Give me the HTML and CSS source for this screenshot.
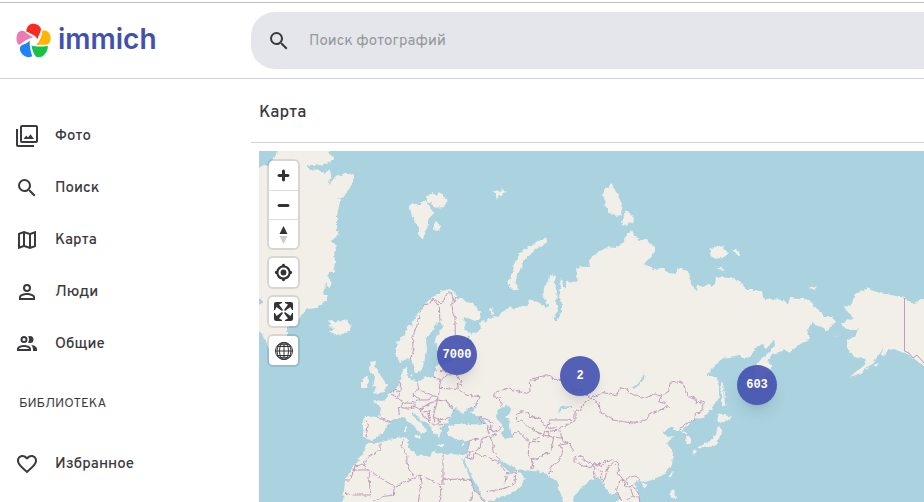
FILE: index.html
```html
<!DOCTYPE html>
<html lang="ru">
<head>
<meta charset="utf-8">
<meta name="viewport" content="width=device-width, initial-scale=1">
<title>Карта - Immich</title>
<link rel="stylesheet" href="styles.css">
</head>
<body>
<svg class="sprite" aria-hidden="true">
  <symbol id="magnify" viewBox="0 0 24 24"><path d="M9.5,3A6.5,6.5 0 0,1 16,9.5C16,11.11 15.41,12.59 14.44,13.73L14.71,14H15.5L20.5,19L19,20.5L14,15.5V14.71L13.73,14.44C12.59,15.41 11.11,16 9.5,16A6.5,6.5 0 0,1 3,9.5A6.5,6.5 0 0,1 9.5,3M9.5,5C7,5 5,7 5,9.5C5,12 7,14 9.5,14C12,14 14,12 14,9.5C14,7 12,5 9.5,5Z"/></symbol>
</svg>
<header class="topbar">
  <a class="brand" href="#">
    <svg class="brand-mark" viewBox="48 70 106 104" aria-hidden="true">
      <path fill="#fa2921" d="M79 95C80 76 92 71 101 71C112 71 122 78 124 88C122 100 114 110 113 118C108 108 95 102 79 95Z"/>
      <path fill="#ffb400" d="M128 92C145 88 153 103 153 115C153 127 146 135 138 135C128 134 118 136 109 135C120 125 127 110 128 92Z"/>
      <path fill="#18c249" d="M95 137C106 141 125 142 144 138C146 150 138 162 132 167C124 174 115 174 109 171C101 163 97 150 95 137Z"/>
      <path fill="#1e83f7" d="M90 122C88 138 92 152 97 170C88 176 70 170 63 158C58 150 59 140 66 136C76 133 84 128 90 122Z"/>
      <path fill="#ed79b5" d="M58 136C48 130 48 112 52 102C57 92 67 90 75 95C82 102 90 108 100 112C85 115 70 125 58 136Z"/>
    </svg>
    <span class="brand-name">immich</span>
  </a>
  <form class="search">
    <button class="search-button" type="button" aria-label="Поиск"><svg class="icon"><use href="#magnify"/></svg></button>
    <input class="search-input" type="text" placeholder="Поиск фотографий" aria-label="Поиск фотографий">
  </form>
</header>
<div class="layout">
  <nav class="sidebar">
    <a class="nav-item" href="#"><svg class="icon" viewBox="0 0 24 24"><path d="M21,17H7V3H21M21,1H7A2,2 0 0,0 5,3V17A2,2 0 0,0 7,19H21A2,2 0 0,0 23,17V3A2,2 0 0,0 21,1M3,5H1V21A2,2 0 0,0 3,23H19V21H3M8.500,15L11.250,11.500L13,13.500L15.500,10.300L19,15Z"/></svg>Фото</a>
    <a class="nav-item" href="#"><svg class="icon"><use href="#magnify"/></svg>Поиск</a>
    <a class="nav-item" href="#"><svg class="icon" viewBox="0 0 24 24"><path d="M20.5,3L20.34,3.03L15,5.1L9,3L3.36,4.9C3.15,4.97 3,5.15 3,5.38V20.5A0.5,0.5 0 0,0 3.5,21L3.66,20.97L9,18.9L15,21L20.64,19.1C20.85,19.03 21,18.85 21,18.62V3.5A0.5,0.5 0 0,0 20.5,3M10,5.47L14,6.87V18.53L10,17.13V5.47M5,6.46L8,5.45V17.15L5,18.31V6.46M19,17.54L16,18.55V6.86L19,5.7V17.54Z"/></svg>Карта</a>
    <a class="nav-item" href="#"><svg class="icon" viewBox="0 0 24 24"><path d="M12,4A4,4 0 0,1 16,8A4,4 0 0,1 12,12A4,4 0 0,1 8,8A4,4 0 0,1 12,4M12,6A2,2 0 0,0 10,8A2,2 0 0,0 12,10A2,2 0 0,0 14,8A2,2 0 0,0 12,6M12,13C14.67,13 20,14.33 20,17V20H4V17C4,14.33 9.33,13 12,13M12,14.9C9.03,14.9 5.9,16.36 5.9,17V18.1H18.1V17C18.1,16.36 14.97,14.9 12,14.9Z"/></svg>Люди</a>
    <a class="nav-item" href="#"><svg class="icon" viewBox="0 0 24 24"><path d="M13.07 10.41A5 5 0 0 0 13.07 4.59A3.39 3.39 0 0 1 15 4A3.5 3.5 0 0 1 15 11A3.39 3.39 0 0 1 13.07 10.41M5.5 7.5A3.5 3.5 0 1 1 9 11A3.5 3.5 0 0 1 5.5 7.5M7.5 7.5A1.5 1.5 0 1 0 9 6A1.5 1.5 0 0 0 7.5 7.5M16 17V19H2V17S2 13 9 13 16 17 16 17M14 17C13.86 16.22 12.67 15 9 15S4.07 16.31 4 17M15.95 13A5.32 5.32 0 0 1 18 17V19H22V17S22 13.37 15.94 13Z"/></svg>Общие</a>
    <h2 class="nav-heading">БИБЛИОТЕКА</h2>
    <a class="nav-item" href="#"><svg class="icon" viewBox="0 0 24 24"><path d="M12.1,18.55L12,18.65L11.89,18.55C7.14,14.24 4,11.39 4,8.5C4,6.5 5.5,5 7.5,5C9.04,5 10.54,6 11.07,7.36H12.93C13.46,6 14.96,5 16.5,5C18.5,5 20,6.5 20,8.5C20,11.39 16.86,14.24 12.1,18.55M16.5,3C14.76,3 13.09,3.81 12,5.08C10.91,3.81 9.24,3 7.5,3C4.42,3 2,5.41 2,8.5C2,12.27 5.4,15.36 10.55,20.03L12,21.35L13.45,20.03C18.6,15.36 22,12.27 22,8.5C22,5.41 19.58,3 16.5,3Z"/></svg>Избранное</a>
  </nav>
  <main class="content">
    <h1 class="page-title">Карта</h1>
    <section class="map" aria-label="Карта">
      <svg class="map-canvas" viewBox="259 151 665 351" preserveAspectRatio="xMinYMin slice" aria-hidden="true">
        <!-- Roughens the simplified coast and border lines -->
        <filter id="rough" filterUnits="userSpaceOnUse" x="249" y="141" width="690" height="375" color-interpolation-filters="sRGB">
          <feTurbulence type="fractalNoise" baseFrequency="0.25" numOctaves="2" seed="4" result="noise"/>
          <feDisplacementMap in="SourceGraphic" in2="noise" scale="4" xChannelSelector="R" yChannelSelector="G"/>
        </filter>
        <g filter="url(#rough)">
        <g class="land">
          <!-- Greenland -->
          <path d="M278 151V146H328V151L331 155 334 158 330 163 320 165 308 166V169L318 170 325 173 329 170 331 173 329 184 336 177 345 173 351 173 354 176V181L349 189 342 198 336 199 341 199 338 209 337 218 337 230 339 236 335 237 332 241 335 244 336 250 334 253 335 262 334 268 335 272 330 272 327 276 331 282V288L328 287 326 283 323 293 329 296 324 302 317 308 307 309 303 314 298 320 287 327V337L275 352 268 347 265 339 260 332 254 327V306H259L262 303V297L259 299H254V168H259L264 164 268 166 273 160Z"/>
          <path d="M328 320 333 321 335 323 338 320 341 321 347 319 348 322 351 327 347 332 338 335 330 332 334 328 328 327 331 324Z"/>
          <!-- Eurasia -->
          <path d="M396 350 397 343 405 334 407 326 411 326 416 316 422 307 432 297 437 295 442 291 450 289 455 292 457 294 455 298 462 298 466 302 472 303 477 308 481 313 480 319 475 321 468 318 463 318 466 323 464 328 468 332 472 333 473 328 477 330 480 329 479 323 483 320 488 322 487 319 494 318 489 309 492 308 494 313 493 316 499 317 500 313 506 310 511 306 512 310 518 307 522 306 526 306 529 303 528 299 538 302 547 308 548 305 543 297 544 288 548 282 549 275 556 276 554 285 557 290 556 303 558 310 553 319 557 321 562 312 562 302 559 297 561 288 559 286 562 277 563 287 566 287 566 282 573 281 578 283 576 268 590 266 589 260 597 252 608 247 615 248 624 242 625 236 632 230 634 236 638 237 638 241 647 239 654 248 654 253 644 264 653 268 653 271 658 268 665 268 667 273 677 274 677 268 688 271 690 283 697 291 698 284 702 287 708 285 711 287 715 284 716 277 730 278 739 281 747 290 761 290 764 299 770 299 784 300 788 305 790 297 806 299 812 303 824 317 832 317 835 322 830 327 828 331 822 327 815 325 813 321 811 326 807 330 810 338 799 345 789 353 786 350 772 354 767 362 771 365 771 370 766 376 758 382 754 375 757 363 764 357 771 350 775 345 774 340 766 349 762 344 756 347 750 357 744 358 740 355 730 357 723 358 705 376 711 376 717 379 719 387 719 397 712 408 703 418 695 419 688 425 681 430 687 434 691 437 691 443 686 445 685 435 680 430 673 430 675 427 670 427 663 432 668 437 674 436 667 443 673 453 672 465 663 475 654 479 645 482 640 480 634 483 638 492 640 502V507H617V502L620 498 617 492 610 494 605 487 603 482 598 477 590 480 582 488 574 495 573 502V507H563V502L557 482 550 477 543 472 532 471 517 469 510 465 503 462 499 457 498 461 507 470 512 473 517 470 525 478 520 488 505 496 488 502V507H486V502L477 487 465 462 466 457 469 445V441L460 440 448 437V427L455 424 467 424 483 425 487 424 483 419 470 413 477 407 468 408 467 411 461 413 455 407 450 417 448 423 439 428 441 432 439 438 432 430 430 424 422 421 412 411 412 415 419 421 426 430 422 435 414 426 403 417 392 420 383 433 372 441 363 437V420L365 417 379 418 381 408 373 400 383 401 389 394 398 387 401 380 403 370 407 367 407 375 411 380 418 381 426 377 435 377V367L441 364 450 363 455 358 447 354 437 350 435 340 439 332 444 326 439 322 434 325 433 331 426 339 427 350 423 367 418 373 415 373 411 360 407 359 400 362 396 356Z"/>
          <!-- Africa -->
          <path d="M368 443 377 443 402 437 408 438 408 448 418 455 430 457 433 451 443 454 466 455 464 460 461 459 468 473 473 487 485 502V507H343V502L345 480 353 467 362 455Z"/>
          <!-- British Isles -->
          <path d="M370 362 376 361 375 367 379 373 387 385 385 392 372 394 377 388 372 385 375 377 369 370ZM362 380 367 375 369 380 367 388 362 388Z"/>
          <path d="M404 427 407 427 406 432 404 432ZM414 435 420 435 419 438ZM437 444H444V446H438ZM461 443H465V445H461ZM410 375 413 374 412 377Z"/>
        </g>
        <!-- Arctic islands -->
        <g class="land" transform="translate(340 150) scale(.3333)">
          <path d="M208 168 222 155 230 167H243L245 153H256L282 190 265 208 262 235 253 247 250 265H243L233 250 237 235 218 205ZM258 140 278 130 290 137 298 127 323 150 312 172 282 173 275 160 262 158ZM282 222 290 213 296 225 304 232 292 243 283 240ZM460 124 475 121 480 128 488 117 497 124 487 134 477 136 478 146 470 150 468 127Z"/>
          <path d="M600 273 570 287 533 315V327L518 350V367L502 400 518 420 538 422 527 405 530 380 550 335 585 300 620 275 615 263Z"/>
          <path d="M783 136 815 99 845 160 843 195 830 198 808 188 795 165 793 145ZM845 227 852 195 861 180 882 205 880 216ZM1111 305 1114 294 1130 288 1148 290 1163 307 1160 322 1124 327 1112 317ZM1131 359 1142 351 1154 364ZM1176 300 1188 300 1202 311 1198 318Z"/>
        </g>
        <!-- Alaska and the Bering Sea -->
        <g class="land" transform="translate(724 230) scale(.3333)">
          <path d="M620 208 590 207 572 222 557 215 540 203 490 193 470 190 440 180 432 172 420 182 405 185 392 193 385 218 377 228 360 230 372 246 392 270 370 268 352 283 370 300 390 299 402 295 400 315 370 328 368 355 390 380 400 385 425 386 425 402 400 423 375 442 405 432 432 410 450 398 462 375 475 355 470 375 480 378 492 360 510 358 550 372 600 408 620 420ZM255 178 265 168 278 171 273 179ZM447 405 461 401 458 410ZM325 316 342 323 330 319ZM0 480 7 501 0 503ZM0 555 15 562 0 570Z"/>
        </g>
        <!-- Japan and the western Pacific -->
        <g class="land" transform="translate(530 320) scale(.3333)">
          <path d="M573 185 580 190 581 230 586 255 577 262 575 225ZM562 303 566 280 580 285 608 290 590 302 573 310ZM567 318 575 330 568 355 557 375 535 378 500 385 520 372 535 369 550 350 558 345 561 325ZM488 392 500 388 499 400 492 405ZM505 384 520 379 510 391ZM424 458 429 454 424 476 419 471ZM337 487 350 495 342 503ZM425 508 434 510 434 527 443 535 428 535 419 523Z"/>
        </g>
        <!-- Seas and lakes -->
        <g class="water">
          <path d="M497 410 506 406 511 408 510 413 506 417 511 421 510 426 512 437 505 439 502 435 503 427 496 417ZM554 320H557V321H554ZM473 328 480 324 481 328 477 333 472 334 466 329 468 323Z"/>
          <path d="M645 372 644 379 639 385 634 389 631 388 638 384 642 378ZM558 412 560 407 572 406 572 408 562 408 561 411ZM451 368 457 370 454 373ZM468 335 473 342 472 348 467 341Z"/>
        </g>
        <!-- Borders: Europe, Africa, Middle East -->
        <g class="borders" transform="translate(340 320) scale(.3333)">
          <path d="M210 120 220 90 217 50 228 25 242-30 252-45 270-50 278-65 298-40 300 5M278-65 300-52 310-55 320-80 335-82 340-55 350-70M335-55 338-30 345-10 346 45"/>
          <path d="M285 150 310 153 325 160M280 175 303 178 320 165 333 165M303 178 298 205 355 208 352 190 368 198 352 165M232 182 236 208 260 220 295 232 298 205M360 212 378 225 417 230 410 250 390 265M182 185 180 215 160 210 150 220M180 215 175 235 190 248 215 250 240 240 262 240 280 230M236 208 218 222 240 240M150 220 175 235M190 248 175 262 178 285M118 295 153 305M78 302 85 312 78 350M175 262 200 265 225 260 225 250M225 260 240 268 255 258 292 240 295 232M240 268 255 275 285 270 292 240M255 258 270 248M240 268 250 290 268 300M285 270 280 290 298 300 330 292M292 240 325 245 342 270M320 243 330 262 345 270M298 300 295 315 320 312M268 300 280 315 295 315M268 275 270 300M250 278 265 285 268 300M280 290 285 305"/>
          <path d="M120 370 120 390 78 415 72 435 45 437 42 455 28 480H12M85 450 163 500 240 465 302 495M309 495V400M309 478H393M190 355 185 378 200 405 202 435 220 470M85 455 92 525 40 525 15 520M72 435 85 450M163 500 160 525 130 530 100 546M240 465 243 490 235 546M302 495V546M393 478 403 510 392 546M85 450 40 450M403 510 425 530 430 546"/>
          <path d="M388 362 425 355 450 350 440 320 425 305 415 290 445 300 460 310M440 320 460 335 475 330 485 320M450 350 460 375 458 390 475 415M425 355 420 385 395 395 382 415 400 418 405 400 465 420 475 425M382 395H392M475 430 500 458 527 460 530 450M500 458 495 490M440 515 495 505 525 490 527 460M388 362 382 410"/>
          <path d="M485 257 478 235 463 230 470 215 500 205 560 220 570 215 568 185 600 175M530 300V280L550 272 575 290 600 295M530 310 545 300 570 325 600 340M515 345 535 333 568 365 600 365M568 365 565 400 580 430 570 450M450 310 455 330 470 345 450 350"/>
        </g>
        <!-- Borders: Central and East Asia -->
        <g class="borders" transform="translate(530 320) scale(.3333)">
          <path d="M0 178 60 163 68 178 105 178 130 210 155 212 183 235 220 217 260 228 270 203 290 208 300 220 345 235 375 222 390 228M390 228 415 215 420 190 445 185 460 192 470 225 495 235 497 250 524 243 515 275 497 280 493 302 475 308 448 328M183 235 208 250 210 275 250 300 312 310 350 298 360 280 415 260 405 250 385 245 395 228M183 235 155 258 152 270 135 275 135 302 110 300 60 300 52 318 65 325 80 320"/>
          <path d="M0 290 30 292 35 308 50 320 40 345 65 350 95 355 88 325 135 302M0 315 25 340 45 350M60 350 50 335 85 330M0 368 30 350M0 420 25 415 45 400 60 400 72 350M95 350 100 365 120 372 128 395M88 375 98 390 95 405 80 430 60 438 68 455 50 462M5 425 12 440 0 450M120 370 88 375M135 410 150 408 170 425 192 432 188 442 160 438 135 425ZM192 432 215 430 245 418 265 435 265 460 280 480 290 475 315 468 330 480M192 432 195 475M195 445 215 455 215 475 222 485 235 440 250 428M265 490 260 510 275 546M280 480 290 500 310 500 325 520 330 546M280 480 265 490M290 540 305 530 325 535M285 480 300 500 310 530M465 345 480 345M195 430 215 440 218 430"/>
        </g>
        </g>
        <path class="borders" d="M904.5 298V351L909 353 913 358 917 355 924 363"/>
      </svg>
      <div class="controls">
        <div class="control-group">
          <button class="control" type="button" aria-label="Приблизить"><svg viewBox="0 0 29 29"><path d="M14.5 8.5c-.75 0-1.5.75-1.5 1.5v3h-3c-.75 0-1.5.75-1.5 1.5S9.25 16 10 16h3v3c0 .75.75 1.5 1.5 1.5S16 19.75 16 19v-3h3c.75 0 1.5-.75 1.5-1.5S19.75 13 19 13h-3v-3c0-.75-.75-1.5-1.5-1.5z"/></svg></button>
          <button class="control" type="button" aria-label="Отдалить"><svg viewBox="0 0 29 29"><path d="M10 13c-.75 0-1.5.75-1.5 1.5S9.25 16 10 16h9c.75 0 1.5-.75 1.5-1.5S19.75 13 19 13h-9z"/></svg></button>
          <button class="control" type="button" aria-label="Север вверху"><svg viewBox="0 0 29 29"><path d="M10.5 14l4-8 4 8h-8z"/><path fill="#ccc" d="M10.5 16l4 8 4-8h-8z"/></svg></button>
        </div>
        <div class="control-group">
          <button class="control" type="button" aria-label="Моё местоположение"><svg viewBox="0 0 20 20"><path fill-rule="evenodd" d="M10 4C9 4 9 5 9 5v.1A5 5 0 0 0 5.1 9H5s-1 0-1 1 1 1 1 1h.1A5 5 0 0 0 9 14.9v.1s0 1 1 1 1-1 1-1v-.1a5 5 0 0 0 3.9-3.9h.1s1 0 1-1-1-1-1-1h-.1A5 5 0 0 0 11 5.1V5s0-1-1-1zm0 2.5a3.5 3.5 0 1 1 0 7 3.5 3.5 0 1 1 0-7z"/><circle cx="10" cy="10" r="2"/></svg></button>
        </div>
        <div class="control-group">
          <button class="control" type="button" aria-label="Во весь экран"><svg viewBox="0 0 29 29"><path d="M24 16v5.5c0 1.75-.75 2.5-2.5 2.5H16v-1l3-1.5-4-5.5 1-1 5.5 4 1.5-3h1zM6 16l1.5 3 5.5-4 1 1-4 5.5 3 1.5v1H7.5C5.75 24 5 23.25 5 21.5V16h1zm7-11v1l-3 1.5 4 5.5-1 1-5.5-4L6 13H5V7.5C5 5.75 5.75 5 7.5 5H13zm11 2.5c0-1.75-.75-2.5-2.5-2.5H16v1l3 1.5-4 5.5 1 1 5.5-4 1.5 3h1V7.5z"/></svg></button>
        </div>
        <div class="control-group">
          <button class="control" type="button" aria-label="Глобус"><svg class="globe" viewBox="0 0 29 29"><circle cx="15" cy="15" r="8.5"/><ellipse cx="15" cy="15" rx="4.5" ry="8.5"/><path d="M15 6.5V23.5M6.5 15H23.5M8 10.5H22M8 19.5H22M10.5 8Q15 10 19.5 8M10.5 22Q15 20 19.5 22"/><ellipse cx="15" cy="15" rx="7" ry="8.5"/></svg></button>
        </div>
      </div>
      <button class="marker marker-north-west" type="button">7000</button>
      <button class="marker marker-central" type="button">2</button>
      <button class="marker marker-east" type="button">603</button>
    </section>
  </main>
</div>
</body>
</html>
```
FILE: styles.css
```css
* {
  box-sizing: border-box;
}

html {
  height: 100%;
  padding-top: 2px;
  overflow: hidden;
}

body {
  display: flex;
  flex-direction: column;
  height: 100%;
  margin: 0;
  overflow: hidden;
  border-top: 1px solid #bbbbc0;
  background: #fff;
  color: #3a3a3d;
  font-family: Overpass, Roboto, "Noto Sans", sans-serif;
  font-size: 15px;
}

a {
  color: inherit;
  text-decoration: none;
}

button {
  padding: 0;
  border: 0;
  font: inherit;
  cursor: pointer;
}

.sprite {
  display: none;
}

.icon {
  width: 24px;
  height: 24px;
  flex: none;
  fill: currentColor;
}

.topbar {
  display: flex;
  flex: none;
  align-items: center;
  height: 76px;
  border-bottom: 1px solid #d1d1db;
}

.brand {
  display: flex;
  flex: none;
  align-items: center;
  gap: 7px;
  width: 251px;
  padding-left: 16px;
}

.brand-mark {
  width: 35px;
  height: 35px;
}

.brand-name {
  padding-bottom: 4px;
  color: #4250af;
  font-family: Inter, sans-serif;
  font-size: 28px;
  font-weight: 600;
  line-height: 32px;
}

.search {
  display: flex;
  flex: 1;
  align-items: center;
  gap: 18px;
  height: 57px;
  padding-left: 16px;
  border-radius: 24px 0 0 24px;
  background: #e5e6eb;
}

.search-button {
  display: flex;
  background: none;
  color: inherit;
}

.search-input {
  flex: 1;
  min-width: 0;
  padding: 2px 0 0;
  border: 0;
  outline: 0;
  background: none;
  font: inherit;
}

.search-input::placeholder {
  color: #97989c;
}

.layout {
  display: flex;
  flex: 1;
  min-height: 0;
}

.sidebar {
  display: flex;
  flex: none;
  flex-direction: column;
  width: 251px;
  padding-top: 31px;
}

.nav-item {
  display: flex;
  flex: none;
  align-items: center;
  gap: 16px;
  height: 52px;
  padding-left: 15px;
  font-weight: 500;
}

.nav-heading {
  flex: none;
  margin: 24px 0;
  padding-left: 19px;
  font-size: 13px;
  font-weight: 400;
  line-height: 20px;
}

.content {
  display: flex;
  flex: 1;
  flex-direction: column;
  min-width: 0;
}

.page-title {
  flex: none;
  height: 64px;
  margin: 0;
  padding: 2px 0 0 8px;
  border-bottom: 1px solid #d1d1db;
  font-size: 17px;
  font-weight: 500;
  line-height: 64px;
}

.map {
  position: relative;
  flex: 1;
  min-height: 0;
  margin: 8px 0 0 8px;
  overflow: hidden;
  background: #aad3df;
}

.map-canvas {
  position: absolute;
  inset: 0;
  width: 100%;
  height: 100%;
}

.land {
  fill: #f2efe9;
}

.water {
  fill: #aad3df;
}

.borders {
  fill: none;
  stroke: #bd9dbb;
  stroke-width: 1px;
  stroke-linejoin: round;
}

.borders path {
  vector-effect: non-scaling-stroke;
}

.controls {
  position: absolute;
  top: 10px;
  left: 10px;
  display: flex;
  flex-direction: column;
  gap: 10px;
}

.control-group {
  border-radius: 4px;
  box-shadow: 0 0 0 2px rgba(0, 0, 0, 0.1);
  background: #fff;
}

.control {
  display: block;
  width: 29px;
  height: 29px;
  background: none;
}

.control + .control {
  border-top: 1px solid #ddd;
}

.control svg {
  display: block;
  width: 29px;
  height: 29px;
  fill: #333;
}

.control .globe {
  fill: none;
  stroke: #333;
}

.marker {
  position: absolute;
  width: 40px;
  height: 40px;
  border-radius: 50%;
  background: rgba(66, 80, 175, 0.9);
  box-shadow: 0 10px 15px -3px rgba(0, 0, 0, 0.1), 0 4px 6px -4px rgba(0, 0, 0, 0.1);
  color: #fff;
  font: bold 12px "Liberation Mono", monospace;
}

.marker-north-west {
  top: 184px;
  left: 178px;
}

.marker-central {
  top: 205px;
  left: 301px;
}

.marker-east {
  top: 214px;
  left: 478px;
}
```
